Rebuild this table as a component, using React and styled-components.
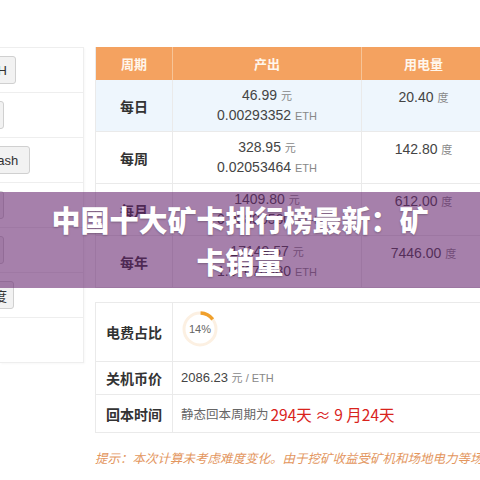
import styled, { createGlobalStyle } from "styled-components";

const GlobalStyle = createGlobalStyle`
  html, body {
    margin: 0;
    padding: 0;
    background: #fff;
    overflow: hidden;
    font-family: "Liberation Sans", "Noto Sans CJK SC", sans-serif;
  }
`;

const sideButtons = [
  { text: "ETH", width: 44, right: 16 },
  { text: "ETC", width: 44, right: 4 },
  { text: "Ethash", width: 64, right: 30 },
  { text: "BTC", width: 44, right: 4 },
  { text: "SHA", width: 44, right: 4 },
  { text: "难度", width: 40, right: 14 },
];

const rows = [
  { period: "每日", cny: "46.99", eth: "0.00293352", kwh: "20.40", active: true },
  { period: "每周", cny: "328.95", eth: "0.02053464", kwh: "142.80" },
  { period: "每月", cny: "1409.80", eth: "0.08800560", kwh: "612.00" },
  { period: "每年", cny: "17149.57", eth: "1.07070480", kwh: "7446.00" },
];

function Donut({ percent }) {
  const r = 16;
  const c = 2 * Math.PI * r;
  return (
    <DonutBox>
      <svg width="38" height="38" viewBox="0 0 38 38">
        <circle cx="19" cy="19" r={r} fill="none" stroke="#fcf0e2" strokeWidth="3" />
        <circle
          cx="19"
          cy="19"
          r={r}
          fill="none"
          stroke="#f0a02c"
          strokeWidth="3.5"
          strokeDasharray={`${c * (percent / 100)} ${c}`}
          transform="rotate(-88 19 19)"
        />
      </svg>
      <DonutText>{percent}%</DonutText>
    </DonutBox>
  );
}

function App() {
  return (
    <>
      <GlobalStyle />
      <Page>
        <SidePanel>
          {sideButtons.map((b) => (
            <SideRow key={b.text}>
              <SideButton $width={b.width} $right={b.right}>
                {b.text}
              </SideButton>
            </SideRow>
          ))}
          <SideRow />
        </SidePanel>
        <Main>
          <Table $cols="77px 189px 124px">
            <HeadCell>周期</HeadCell>
            <HeadCell>产出</HeadCell>
            <HeadCell $last>用电量</HeadCell>
            {rows.map((r) => (
              <Row key={r.period} $active={r.active}>
                <Cell $h={52}>
                  <Label>{r.period}</Label>
                </Cell>
                <Cell $h={52}>
                  <Stack>
                    <Value>
                      {r.cny} <Unit>元</Unit>
                    </Value>
                    <Value>
                      {r.eth} <Unit>ETH</Unit>
                    </Value>
                  </Stack>
                </Cell>
                <Cell $h={52} $last>
                  <Stack $top>
                    <Value>
                      {r.kwh} <Unit>度</Unit>
                    </Value>
                  </Stack>
                </Cell>
              </Row>
            ))}
          </Table>

          <Table $cols="77px 313px" $gap>
            <Cell $h={59}>
              <Label>电费占比</Label>
            </Cell>
            <Cell $h={59} $last $left>
              <Donut percent={14} />
            </Cell>
            <Cell $h={33}>
              <Label>关机币价</Label>
            </Cell>
            <Cell $h={33} $last $left>
              <Value $small>
                2086.23 <Unit>元 / ETH</Unit>
              </Value>
            </Cell>
            <Cell $h={38}>
              <Label>回本时间</Label>
            </Cell>
            <Cell $h={38} $last $left>
              <Plain>静态回本周期为</Plain>
              <Red>294天 ≈ 9 月24天</Red>
            </Cell>
          </Table>

          <Tip>提示：本次计算未考虑难度变化。由于挖矿收益受矿机和场地电力等场地因素影响</Tip>
        </Main>
      </Page>
      <Banner>
        <BannerTitle>中国十大矿卡排行榜最新：矿卡销量</BannerTitle>
      </Banner>
    </>
  );
}

export default App;

const Page = styled.div`
  display: flex;
  align-items: flex-start;
  padding-top: 47px;
  width: 480px;
`;

const SidePanel = styled.div`
  flex: none;
  width: 83px;
  border-top: 1px solid #eee;
  border-right: 1px solid #eee;
  box-shadow: 1px 1px 2px rgba(0, 0, 0, 0.03);
  overflow: hidden;
`;

const SideRow = styled.div`
  height: 44px;
  border-bottom: 1px solid #eee;
  display: flex;
  align-items: center;
`;

const SideButton = styled.div`
  flex: none;
  box-sizing: border-box;
  width: ${(p) => p.$width}px;
  margin-left: ${(p) => p.$right - p.$width}px;
  height: 28px;
  display: flex;
  align-items: center;
  justify-content: center;
  background: #f2f2f2;
  border: 1px solid #d0d0d0;
  border-radius: 3px;
  font-size: 13px;
  color: #333;
`;

const Main = styled.div`
  flex: none;
  width: 390px;
  margin-left: 11px;
`;

const Table = styled.div`
  display: grid;
  grid-template-columns: ${(p) => p.$cols};
  border-top: ${(p) => (p.$gap ? "1px solid #eaeaea" : "none")};
  border-left: 1px solid #eaeaea;
  margin-top: ${(p) => (p.$gap ? "14px" : "0")};
`;

const HeadCell = styled.div`
  height: 33px;
  background: #f4a260;
  color: #fff6ec;
  font-family: "Noto Sans CJK SC", sans-serif;
  font-weight: 700;
  font-size: 13px;
  display: flex;
  align-items: center;
  justify-content: center;
  border-right: 1px solid ${(p) => (p.$last ? "#f4a260" : "#f7c497")};
`;

const Row = styled.div`
  display: contents;
  & > div {
    background: ${(p) => (p.$active ? "#eef6fd" : "#fff")};
  }
`;

const Cell = styled.div`
  box-sizing: border-box;
  height: ${(p) => p.$h}px;
  display: flex;
  align-items: center;
  justify-content: ${(p) => (p.$left ? "flex-start" : "center")};
  padding-left: ${(p) => (p.$left ? "8px" : "0")};
  border-right: 1px solid #eaeaea;
  border-bottom: 1px solid #eaeaea;
  background: #fff;
`;

const Label = styled.span`
  font-family: "Noto Sans CJK SC", sans-serif;
  font-weight: 700;
  font-size: 14px;
  color: #333;
`;

const Stack = styled.div`
  display: flex;
  flex-direction: column;
  align-items: center;
  gap: 2px;
  align-self: ${(p) => (p.$top ? "flex-start" : "center")};
  margin-top: ${(p) => (p.$top ? "9px" : "0")};
`;

const Value = styled.span`
  font-size: ${(p) => (p.$small ? "13px" : "14px")};
  color: #444;
  line-height: 17px;
`;

const Unit = styled.span`
  font-size: 11px;
  color: #888;
`;

const DonutBox = styled.div`
  position: relative;
  width: 38px;
  height: 38px;
  margin-top: -6px;
  display: flex;
  align-items: center;
  justify-content: center;
  svg {
    position: absolute;
    inset: 0;
  }
`;

const DonutText = styled.span`
  font-size: 11px;
  color: #666;
`;

const Plain = styled.span`
  font-family: "Noto Sans CJK SC", sans-serif;
  font-size: 12.5px;
  color: #666;
`;

const Red = styled.span`
  font-family: "Noto Sans CJK SC", sans-serif;
  font-size: 15.5px;
  color: #d9231c;
  margin-left: 2px;
`;

const Tip = styled.div`
  margin-top: 16px;
  font-family: "Noto Sans CJK SC", sans-serif;
  font-size: 12.5px;
  font-style: italic;
  color: #e3965e;
  white-space: nowrap;
  line-height: 18px;
`;

const Banner = styled.div`
  position: absolute;
  left: 0;
  top: 192px;
  width: 480px;
  height: 96px;
  box-sizing: border-box;
  padding: 0 40px;
  background: rgba(98, 32, 108, 0.57);
  display: flex;
  align-items: center;
  justify-content: center;
`;

const BannerTitle = styled.h1`
  margin: 0;
  font-family: "Noto Sans CJK SC", sans-serif;
  font-weight: 900;
  font-size: 29px;
  line-height: 42px;
  color: #fff;
  text-align: center;
  text-shadow: 0 1px 2px rgba(0, 0, 0, 0.25);
`;
